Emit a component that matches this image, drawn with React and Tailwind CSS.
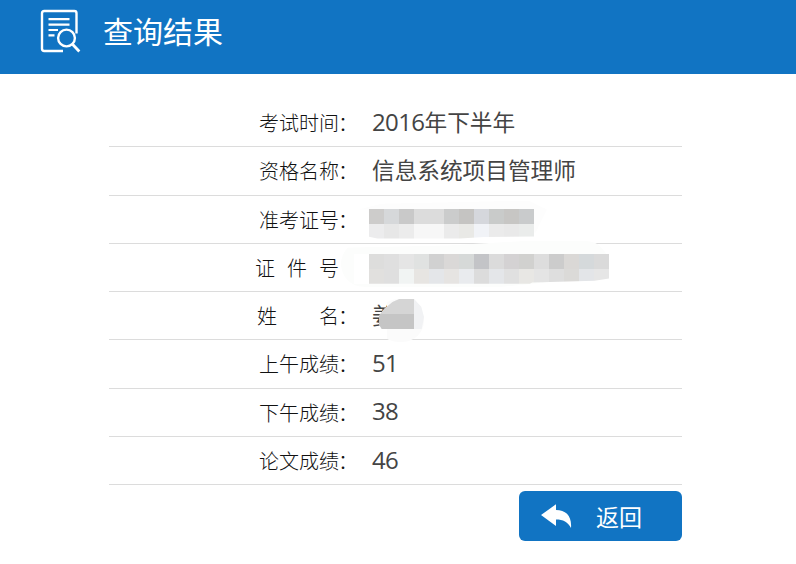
const ADMISSION_COLORS = [
  ['bg-[#cdcccb]', 'bg-[#d6d8da]', 'bg-[#c9c9c9]', 'bg-[#dcdcdc]', 'bg-[#dcdcdc]', 'bg-[#cbcccc]', 'bg-[#c5c4c2]', 'bg-[#d5d7dc]', 'bg-[#c9cbca]', 'bg-[#c7c6c4]', 'bg-[#c9cbcc]'],
  ['bg-[#ececed]', 'bg-[#e7e7e7]', 'bg-[#ececec]', 'bg-[#f7f7f7]', 'bg-[#f7f7f7]', 'bg-[#ebebeb]', 'bg-[#e9e9e6]', 'bg-[#f1f3f7]', 'bg-[#ebebeb]', 'bg-[#e9e9e9]', 'bg-[#eaeceb]'],
];

const ID_COLORS = [
  ['bg-[#dddddc]', 'bg-[#dfdfdf]', 'bg-[#e5e5e5]', 'bg-[#e0e2e1]', 'bg-[#d1d1d1]', 'bg-[#dad8d7]', 'bg-[#d6d9d8]', 'bg-[#c3c4c7]', 'bg-[#dbdbdb]', 'bg-[#d4d2d3]', 'bg-[#d1d1cf]', 'bg-[#dddddd]', 'bg-[#cccccc]', 'bg-[#dad8d6]', 'bg-[#d5d9db]', 'bg-[#dadada]'],
  ['bg-[#e1e0de]', 'bg-[#dfdfdf]', 'bg-[#f1f4f3]', 'bg-[#e7e5e2]', 'bg-[#e4e6e9]', 'bg-[#e6e4e2]', 'bg-[#e9ebee]', 'bg-[#dcdcdc]', 'bg-[#e4e6e9]', 'bg-[#e0e0e0]', 'bg-[#e8e7e4]', 'bg-[#e4e4e4]', 'bg-[#dedede]', 'bg-[#dbdad8]', 'bg-[#e3e5e8]', 'bg-[#e6e6e6]'],
];

function Mosaic({ rows, className }) {
  return (
    <div className={className}>
      {rows.map((row, y) => (
        <div key={y} className="flex">
          {row.map((color, x) => (
            <span key={x} className={`h-[15px] w-[15px] shrink-0 ${color}`} />
          ))}
        </div>
      ))}
    </div>
  );
}

function Row({ label, labelClass = 'pl-[150px]', valueClass = 'pt-px', colon = true, children }) {
  return (
    <div className="relative flex h-[48.25px] items-center border-b border-[#dcdcdc]">
      <div className={`flex w-[263px] shrink-0 pt-[3px] text-[20px] leading-none font-light whitespace-pre text-[#111] ${labelClass}`}>
        {label}
        {colon && <span className="-ml-px">：</span>}
      </div>
      <div className={`text-[22.67px] leading-none whitespace-nowrap text-[#444] ${valueClass}`}>{children}</div>
    </div>
  );
}

function Digits({ children }) {
  return <span className="text-[24px] leading-none tracking-[-0.6px]">{children}</span>;
}

function SearchDocIcon() {
  return (
    <svg className="h-[46px] w-[42px]" viewBox="0 0 42 46" fill="none" stroke="white" strokeWidth="2.4">
      <path d="M24 43H5.200Q3 43 3 40.8V5.200Q3 3 5.200 3H35.300Q37.500 3 37.500 5.200V25.500" />
      <path d="M9.500 11.200h21M9.500 16.700h21M9.500 22h9.500M9.500 27.300h6" strokeWidth="2.200" />
      <circle cx="27.500" cy="30" r="8.400" />
      <path d="M33.500 36.200l6.800 7.300" strokeWidth="2.800" />
    </svg>
  );
}

function ReplyIcon() {
  return (
    <svg className="h-[24px] w-[31px]" viewBox="0 0 31 24" fill="white">
      <path d="M0 11L15 0.300V6C25 6 31 12 30 24C27 18 22 15.500 15 15.500V22Z" />
    </svg>
  );
}

export default function App() {
  return (
    <div className="h-[564px] w-[796px] overflow-hidden bg-white font-['Open_Sans','Noto_Sans_CJK_SC',sans-serif]">
      <header className="flex h-[74px] items-start bg-[#1174c3] pt-2 pl-[39px] text-white">
        <SearchDocIcon />
        <h1 className="mt-[9px] ml-[22px] text-[30px] leading-none">查询结果</h1>
      </header>

      <main className="ml-[109px] w-[573px] pt-[25.05px]">
        <Row label="考试时间" valueClass="pt-0"><Digits>2016</Digits>年下半年</Row>
        <Row label="资格名称">信息系统项目管理师</Row>
        <Row label="准考证号">
          <div className="absolute top-[5px] left-[250px] h-[32px] w-[188px] bg-[#fdfdfd] [clip-path:polygon(0_28%,12%_10%,90%_0,100%_28%,94%_100%,6%_100%,5%_28%)]" />
          <Mosaic
            rows={ADMISSION_COLORS}
            className="absolute top-[13px] left-[260px] h-[30px] w-[165px] overflow-hidden [clip-path:polygon(0_0,100%_0,100%_93%,70%_95%,55%_100%,5%_100%,0_94%)]"
          />
        </Row>
        <Row
          label={<span className="flex gap-[12px]"><span>证</span><span>件</span><span>号</span></span>}
          labelClass="pl-[146px]"
          colon={false}
        >
          <div className="absolute top-[-3px] left-[232px] h-[46px] w-[268px] rounded-[24px] bg-[#fcfdfc] [clip-path:polygon(0_15%,40%_10%,70%_0,95%_0,100%_35%,95%_80%,60%_100%,0_100%)]" />
          <div className="absolute top-[10px] left-[245px] h-[30px] w-[15px] bg-white" />
          <Mosaic
            rows={ID_COLORS}
            className="absolute top-[10px] left-[260px] h-[30px] w-[240px] overflow-hidden [clip-path:polygon(0_0,100%_0,100%_82%,94%_90%,68%_96%,67%_100%,0_100%)]"
          />
        </Row>
        <Row label={<><span className="w-[62px]">姓</span><span>名</span></>} labelClass="pl-[148px]">
          姜
          <div className="absolute top-[7px] left-[268px] h-[43px] w-[47px] rounded-full bg-[#fbfbfb] [clip-path:inset(0_0_0_10px)]" />
          <div className="absolute top-[7px] left-[270px] h-[30px] w-[45px] overflow-hidden bg-[#f1f2f4] [clip-path:polygon(0_100%,0_55%,12%_32%,30%_10%,45%_0,78%_0,94%_26%,100%_60%,95%_100%,6%_100%,0_85%)]">
            <div className="h-[15px] w-[35px] bg-[#d5d5d5]" />
            <div className="h-[15px] w-[35px] bg-[#c5c5c5]" />
          </div>
        </Row>
        <Row label="上午成绩" valueClass="pb-px"><Digits>51</Digits></Row>
        <Row label="下午成绩" valueClass="pb-px"><Digits>38</Digits></Row>
        <Row label="论文成绩" valueClass="pb-px"><Digits>46</Digits></Row>

        <div className="flex justify-end pt-[6px]">
          <button className="flex h-[50px] w-[163px] items-center rounded-md bg-[#1174c3] pl-[22px] text-[23px] leading-none text-white">
            <ReplyIcon />
            <span className="ml-6 pt-[2px]">返回</span>
          </button>
        </div>
      </main>
    </div>
  );
}
